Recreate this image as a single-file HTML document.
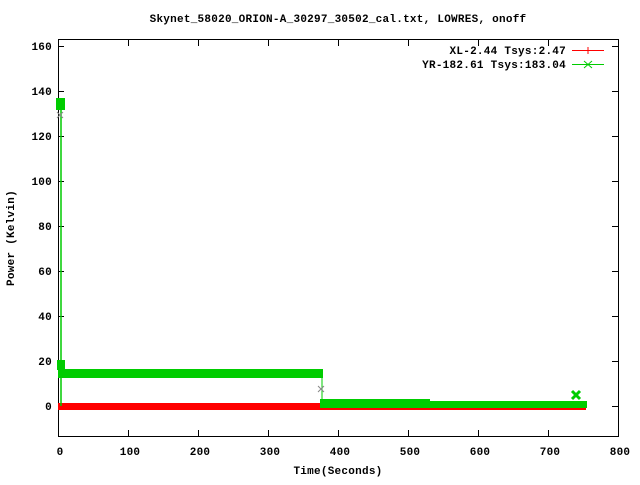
<!DOCTYPE html>
<html><head><style>
body{margin:0;background:#fff;}
svg text{font-family:"Liberation Mono",monospace;font-weight:bold;font-size:11px;fill:#000;letter-spacing:0.25px}
</style></head><body>
<svg width="640" height="480" xmlns="http://www.w3.org/2000/svg">
<rect width="640" height="480" fill="#fff"/>
<text x="338" y="22" text-anchor="middle">Skynet_58020_ORION-A_30297_30502_cal.txt, LOWRES, onoff</text>
<g stroke="#000" stroke-width="1">
<rect x="58.5" y="39.5" width="560" height="397" fill="none"/>
<path d="M58 46.5h6M612 46.5h6 M58 91.5h6M612 91.5h6 M58 136.5h6M612 136.5h6 M58 181.5h6M612 181.5h6 M58 226.5h6M612 226.5h6 M58 271.5h6M612 271.5h6 M58 316.5h6M612 316.5h6 M58 361.5h6M612 361.5h6 M58 406.5h6M612 406.5h6"/>
<path d="M128.5 436v-6M128.5 40v6 M198.5 436v-6M198.5 40v6 M268.5 436v-6M268.5 40v6 M338.5 436v-6M338.5 40v6 M408.5 436v-6M408.5 40v6 M478.5 436v-6M478.5 40v6 M548.5 436v-6M548.5 40v6"/>
</g>
<g text-anchor="end">
<text x="52" y="50">160</text><text x="52" y="95">140</text><text x="52" y="140">120</text><text x="52" y="185">100</text>
<text x="52" y="230">80</text><text x="52" y="275">60</text><text x="52" y="320">40</text><text x="52" y="365">20</text><text x="52" y="410">0</text>
</g>
<g text-anchor="middle">
<text x="60" y="455">0</text><text x="130" y="455">100</text><text x="200" y="455">200</text><text x="270" y="455">300</text>
<text x="340" y="455">400</text><text x="410" y="455">500</text><text x="480" y="455">600</text><text x="550" y="455">700</text><text x="620" y="455">800</text>
<text x="338" y="474">Time(Seconds)</text>
</g>
<text x="14" y="238" text-anchor="middle" transform="rotate(-90 14 238)">Power (Kelvin)</text>
<text x="566" y="54" text-anchor="end">XL-2.44 Tsys:2.47</text>
<text x="566" y="68" text-anchor="end">YR-182.61 Tsys:183.04</text>
<path d="M572 50.5h32M588 47v7" stroke="#f00"/>
<path d="M572 64.5h32M584 61l8 7M584 68l8-7" stroke="#0c0"/>
<rect x="58" y="403" width="528" height="7" fill="#f00"/>
<path d="M61 406V105" stroke="#0c0" stroke-width="1.5"/>
<rect x="58" y="369" width="265" height="9" fill="#0c0"/>
<path d="M322 374V402" stroke="#0c0"/>
<rect x="320" y="401" width="267" height="7" fill="#0c0"/>
<rect x="320" y="399" width="110" height="3" fill="#0c0"/>
<rect x="56" y="98" width="9" height="12" fill="#0c0"/>
<rect x="57" y="360" width="8" height="10" fill="#0c0"/>
<path d="M572 391l8 8M572 399l8-8" stroke="#0c0" stroke-width="3"/>
<path d="M57 112l6 6M57 118l6-6M318 386l6 6M318 392l6-6" stroke="#888"/>
</svg>
</body></html>
